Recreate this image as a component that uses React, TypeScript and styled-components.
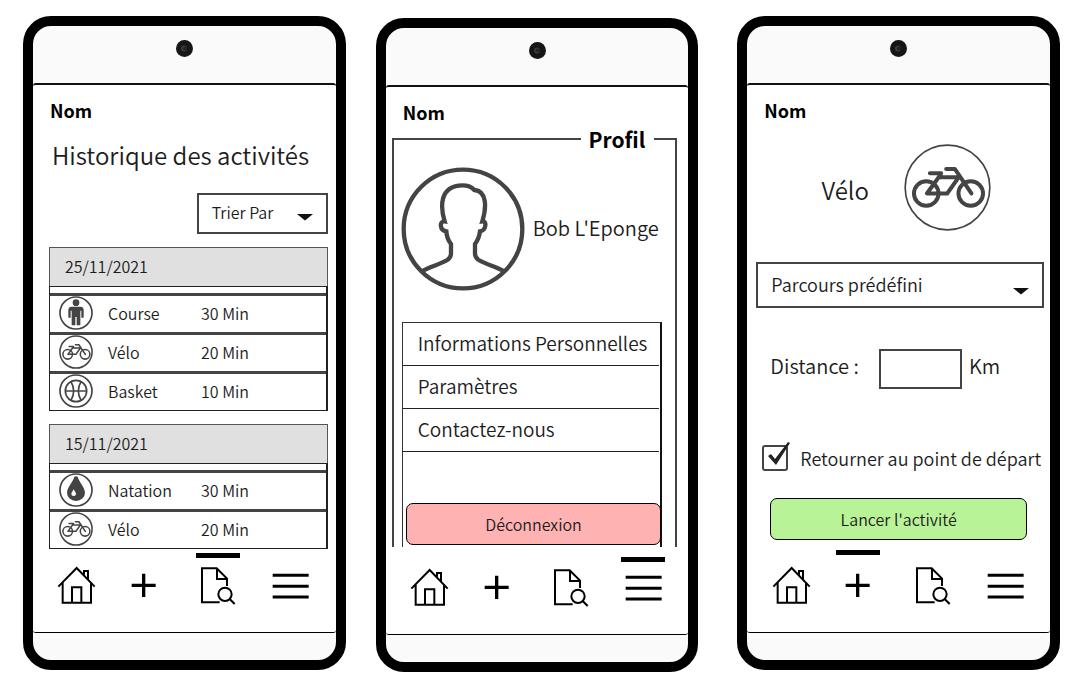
import React from "react";
import styled, { createGlobalStyle } from "styled-components";

const ink = "#444444";

const GlobalStyle = createGlobalStyle`
  *, *::before, *::after { box-sizing: border-box; }
  body {
    margin: 0;
    background: #ffffff;
    color: #1c1c1c;
    font-family: "Noto Sans CJK JP", "Noto Sans", sans-serif;
    font-weight: 350;
    font-size: 16px;
    line-height: 24px;
  }
  h1, h2, p, ul, fieldset { margin: 0; padding: 0; font-weight: inherit; }
  ul { list-style: none; }
  a { color: inherit; text-decoration: none; }
  button, select, input { font: inherit; color: inherit; margin: 0; }
`;

const Board = styled.main`
  display: flex;
  align-items: flex-start;
  padding: 16px 17px 16px 23px;
`;

const Phone = styled.section<{ $left?: number; $top?: number }>`
  flex: 1 1 322px;
  min-width: 322px;
  margin-left: ${(p) => p.$left ?? 0}px;
  margin-top: ${(p) => p.$top ?? 0}px;
  border: 10px solid #000000;
  border-radius: 28px;
  overflow: hidden;
  background: #fafafa;
`;

const Speaker = styled.header`
  display: flex;
  justify-content: center;
  padding-top: 14px;
  height: 57px;
`;

const Screen = styled.div`
  display: flex;
  flex-direction: column;
  min-height: 550px;
  background: #ffffff;
  border-top: 2px solid #111111;
  border-bottom: 1px solid #000000;
  border-radius: 3px;
`;

const Chin = styled.footer`
  height: 27px;
`;

const Name = styled.p`
  margin: 13px 0 0 17px;
  font-size: 18px;
  font-weight: 700;
  color: #000000;
`;

const Title = styled.h1`
  margin: 17px 0 0 19px;
  font-size: 24px;
  line-height: 32px;
`;

const SelectBox = styled.div<{ $width?: number }>`
  position: relative;
  width: ${(p) => (p.$width ? `${p.$width}px` : "auto")};

  svg {
    position: absolute;
    right: 14px;
    bottom: 13px;
    pointer-events: none;
  }
`;

const Select = styled.select<{ $height: number; $size: number }>`
  appearance: none;
  display: block;
  width: 100%;
  height: ${(p) => p.$height}px;
  padding: 0 32px 3px 13px;
  border: 2px solid #444444;
  border-radius: 0;
  background: #ffffff;
  font-size: ${(p) => p.$size}px;
`;

const SortRow = styled.div`
  display: flex;
  justify-content: flex-end;
  margin: 22px 8px 0 0;
`;

const Days = styled.div`
  display: flex;
  flex-direction: column;
  gap: 13px;
  margin: 13px 8px 0 16px;
`;

const Day = styled.table`
  width: 100%;
  border: 1px solid #222222;
  border-right-width: 2px;
  border-spacing: 0;

  caption {
    padding: 0 0 0 15px;
    height: 39px;
    line-height: 36px;
    text-align: left;
    background: #e0e0e0;
    border: 1px solid #555555;
    border-bottom: 0;
  }
  thead th { height: 6px; padding: 0; }
  tbody td {
    height: 39px;
    padding: 0 0 2px;
    border-top: 3px solid ${ink};
  }
  td:nth-child(1) { width: 58px; padding-left: 9px; }
  td:nth-child(2) { width: 93px; }
  td svg { display: block; }
`;

const NavBar = styled.nav`
  display: grid;
  grid-template-columns: 70fr 63fr 86fr 60fr;
  height: 80px;
  margin-top: auto;
  padding: 14px 15px 0 9px;
`;

const NavLink = styled.a<{ $lift?: number }>`
  position: relative;
  display: flex;
  justify-content: center;
  align-items: flex-start;
  color: #000000;

  &[aria-current]::before {
    content: "";
    position: absolute;
    top: -${(p) => p.$lift ?? 12}px;
    width: 44px;
    height: 5px;
    background: #000000;
  }
`;

const ProfileBox = styled.fieldset`
  min-width: 0;
  margin: 3px 11px 0 6px;
  padding: 0 13px 0 8px;
  border: 2px solid #444444;
  border-bottom: 0;

  legend {
    margin-left: auto;
    margin-right: 8px;
    padding: 0 9px 0 8px;
    font-size: 21px;
    line-height: 24px;
    font-weight: 700;
    color: #000000;
  }
`;

const Identity = styled.div`
  display: flex;
  align-items: center;
  gap: 8px;
  margin: 16px 0 0 -1px;
  font-size: 20px;
  white-space: nowrap;

  span { padding-bottom: 2px; }
`;

const Panel = styled.div`
  margin-top: 31px;
  border: 1px solid #333333;
  border-right: 2px solid #111111;
  border-bottom: 0;

  ul { margin-right: 1px; }
`;

const Entry = styled.li`
  border-bottom: 1px solid #222222;

  a {
    display: block;
    padding: 0 0 2px 15px;
    font-size: 19px;
    line-height: 40px;
    white-space: nowrap;
  }
`;

const Action = styled.button<{ $tone: string }>`
  display: block;
  width: 100%;
  height: 42px;
  padding: 0;
  border: 1px solid #000000;
  border-radius: 7px;
  background: ${(p) => p.$tone};
`;

const Logout = styled.div`
  margin-right: -1px;
  padding: 51px 0 2px 3px;
`;

const Sport = styled.div`
  display: flex;
  align-items: center;
  justify-content: flex-end;
  gap: 35px;
  margin: 22px 59px 0 0;

  h1 { padding-top: 4px; font-size: 24px; line-height: 32px; }
`;

const Route = styled.div`
  margin: 31px 6px 0 9px;
`;

const Distance = styled.label`
  display: flex;
  align-items: center;
  margin: 41px 0 0 23px;
  font-size: 20px;

  span { padding-bottom: 6px; }
  input {
    width: 83px;
    height: 40px;
    margin: 0 7px 0 20px;
    border: 2px solid #444444;
    border-radius: 0;
    background: #ffffff;
    text-align: center;
  }
`;

const Return = styled.label`
  display: flex;
  align-items: center;
  gap: 12px;
  margin: 56px 0 0 15px;
  font-size: 18px;
  white-space: nowrap;
`;

const Tick = styled.span`
  position: relative;
  display: flex;

  input {
    appearance: none;
    width: 26px;
    height: 26px;
    border: 2px solid #444444;
    border-radius: 3px;
    background: #ffffff;
  }
  svg { position: absolute; left: 5px; top: -4px; pointer-events: none; visibility: hidden; }
  input:checked + svg { visibility: visible; }
`;

const Start = styled.div`
  margin: 27px 23px 0 23px;
`;

const Camera = () => (
  <svg width="17" height="17" viewBox="0 0 17 17" aria-hidden="true">
    <circle cx="8.5" cy="8.5" r="8.5" fill="#161616" />
    <circle cx="8" cy="8.5" r="3" fill="#3c3c40" />
    <circle cx="9" cy="8.5" r="2" fill="#222226" />
  </svg>
);

const Caret = () => (
  <svg width="18" height="8" viewBox="0 0 18 8" aria-hidden="true">
    <path d="M1 1H17L9 7.500Z" fill="#111111" />
  </svg>
);

const BikeGlyph = ({ size, ring, line }: { size: number; ring: number; line: number }) => (
  <svg width={size} height={size} viewBox="528 222 262 262" fill="none" stroke={ink} aria-hidden="true">
    <circle cx="659" cy="353" r={130 - ring / 2} strokeWidth={ring} />
    <g strokeWidth={line} strokeLinecap="round" strokeLinejoin="round">
      <circle cx="595" cy="371" r="37" />
      <circle cx="729" cy="371" r="37" />
      <path d="M639 313 597 371H658L693 322H636M606 310H640M655 297H681L731 371" />
    </g>
  </svg>
);

const RunIcon = () => (
  <svg width="34" height="34" viewBox="134 199 102 102" aria-hidden="true">
    <circle cx="185" cy="250" r="48" fill="none" stroke={ink} strokeWidth="5" />
    <circle cx="185" cy="219" r="10" fill={ink} />
    <path d="M172 231H198Q208 231 208 241V264H201V243H198V287H187V262H183V287H172V243H169V264H162V241Q162 231 172 231Z" fill={ink} />
  </svg>
);

const BallIcon = () => (
  <svg width="34" height="34" viewBox="134 432 102 102" fill="none" stroke={ink} strokeWidth="5" aria-hidden="true">
    <circle cx="185" cy="483" r="48" />
    <circle cx="185" cy="483" r="32" />
    <path d="M153 483H217M170 455Q186 483 170 511M200 455Q184 483 200 511" />
  </svg>
);

const DropIcon = () => (
  <svg width="34" height="34" viewBox="134 175 102 102" aria-hidden="true">
    <circle cx="185" cy="226" r="48" fill="none" stroke={ink} strokeWidth="5" />
    <path d="M180 186Q185 184 190 186C194 203 212 217 212 234A27 25 0 0 1 158 234C158 217 176 203 180 186Z" fill={ink} />
    <path d="M178 224C180 230 185 233 185 238A7 6 0 0 1 171 238C171 233 176 230 178 224Z" fill="#ffffff" />
  </svg>
);

const Avatar = () => (
  <svg width="124" height="124" viewBox="99 471 372 372" fill="none" stroke={ink} strokeWidth="13" aria-hidden="true">
    <circle cx="285" cy="657" r="178" />
    <path d="M163 783C188 769 216 763 238 750Q249 743 249 730V702C241 692 236 681 235 664C214 661 214 632 230 634C218 595 211 527 284 526Q307 526 319 540C357 543 356 592 343 634C357 632 355 661 336 664C334 681 329 692 321 702V730Q321 743 332 750C354 763 382 769 407 783" />
  </svg>
);

const HomeIcon = () => (
  <svg width="39" height="39" viewBox="24 63 117 117" fill="none" stroke="currentColor" strokeWidth="6" aria-hidden="true">
    <path d="M28 125 83 69 137 125M41 113V173H126V113M69 173V127H97V173M105 89V78H117V103" />
  </svg>
);

const PlusIcon = () => (
  <svg width="39" height="39" viewBox="223 63 117 117" fill="none" stroke="currentColor" strokeWidth="10" aria-hidden="true">
    <path d="M246 121H318M282 86V156" />
  </svg>
);

const HistoryIcon = () => (
  <svg width="39" height="39" viewBox="27 63 117 117" fill="none" stroke="currentColor" strokeWidth="6" aria-hidden="true">
    <path d="M92 172H39V70H83L114 101V123M84 70V102H114" />
    <circle cx="108" cy="148" r="20" />
    <path d="M122 162 137 177" />
  </svg>
);

const MenuIcon = () => (
  <svg width="39" height="39" viewBox="244 63 117 117" fill="none" stroke="currentColor" strokeWidth="9" aria-hidden="true">
    <path d="M249 91H357M249 124H357M249 156H357" />
  </svg>
);

const tabs = [
  { id: "accueil", label: "Accueil", icon: <HomeIcon /> },
  { id: "ajouter", label: "Ajouter", icon: <PlusIcon /> },
  { id: "historique", label: "Historique", icon: <HistoryIcon /> },
  { id: "menu", label: "Menu", icon: <MenuIcon /> },
];

const Tabs = ({ active, lift }: { active: string; lift: number }) => (
  <NavBar>
    {tabs.map((t) => (
      <NavLink
        key={t.id}
        href={`#${t.id}`}
        aria-label={t.label}
        aria-current={t.id === active ? "page" : undefined}
        $lift={lift}
      >
        {t.icon}
      </NavLink>
    ))}
  </NavBar>
);

type FrameProps = { left?: number; top?: number; active: string; lift: number; children: React.ReactNode };

const Frame = ({ left, top, active, lift, children }: FrameProps) => (
  <Phone $left={left} $top={top}>
    <Speaker><Camera /></Speaker>
    <Screen>
      <Name>Nom</Name>
      {children}
      <Tabs active={active} lift={lift} />
    </Screen>
    <Chin />
  </Phone>
);

const smallBike = <BikeGlyph size={34} ring={12} line={12} />;

const days = [
  {
    date: "25/11/2021",
    rows: [
      { icon: <RunIcon />, name: "Course", time: "30 Min" },
      { icon: smallBike, name: "Vélo", time: "20 Min" },
      { icon: <BallIcon />, name: "Basket", time: "10 Min" },
    ],
  },
  {
    date: "15/11/2021",
    rows: [
      { icon: <DropIcon />, name: "Natation", time: "30 Min" },
      { icon: smallBike, name: "Vélo", time: "20 Min" },
    ],
  },
];

export default function App() {
  return (
    <>
      <GlobalStyle />
      <Board>
        <Frame active="historique" lift={13}>
          <Title>Historique des activités</Title>
          <SortRow>
            <SelectBox $width={131}>
              <Select $height={41} $size={16} aria-label="Trier par">
                <option>Trier Par</option>
              </Select>
              <Caret />
            </SelectBox>
          </SortRow>
          <Days>
            {days.map((d) => (
              <Day key={d.date}>
                <caption>{d.date}</caption>
                <thead><tr><th colSpan={3} /></tr></thead>
                <tbody>
                  {d.rows.map((r) => (
                    <tr key={r.name}>
                      <td>{r.icon}</td>
                      <td>{r.name}</td>
                      <td>{r.time}</td>
                    </tr>
                  ))}
                </tbody>
              </Day>
            ))}
          </Days>
        </Frame>

        <Frame left={30} top={2} active="menu" lift={11}>
          <ProfileBox>
            <legend>Profil</legend>
            <Identity>
              <Avatar />
              <span>Bob L'Eponge</span>
            </Identity>
            <Panel>
              <ul>
                <Entry><a href="#informations">Informations Personnelles</a></Entry>
                <Entry><a href="#parametres">Paramètres</a></Entry>
                <Entry><a href="#contact">Contactez-nous</a></Entry>
              </ul>
              <Logout><Action type="button" $tone="#ffb2b2">Déconnexion</Action></Logout>
            </Panel>
          </ProfileBox>
        </Frame>

        <Frame left={39} active="ajouter" lift={16}>
          <Sport>
            <h1>Vélo</h1>
            <BikeGlyph size={87} ring={5} line={12} />
          </Sport>
          <Route>
            <SelectBox>
              <Select $height={46} $size={18} aria-label="Parcours">
                <option>Parcours prédéfini</option>
              </Select>
              <Caret />
            </SelectBox>
          </Route>
          <Distance>
            <span>Distance :</span>
            <input type="text" inputMode="numeric" />
            <span>Km</span>
          </Distance>
          <Return>
            <Tick>
              <input type="checkbox" defaultChecked />
              <svg width="24" height="26" viewBox="0 0 24 26" aria-hidden="true">
                <path d="M1 15 4 13 8 18 21 1 23 2 9 24Z" fill="#222222" />
              </svg>
            </Tick>
            Retourner au point de départ
          </Return>
          <Start><Action type="button" $tone="#b8f397">Lancer l'activité</Action></Start>
        </Frame>
      </Board>
    </>
  );
}
